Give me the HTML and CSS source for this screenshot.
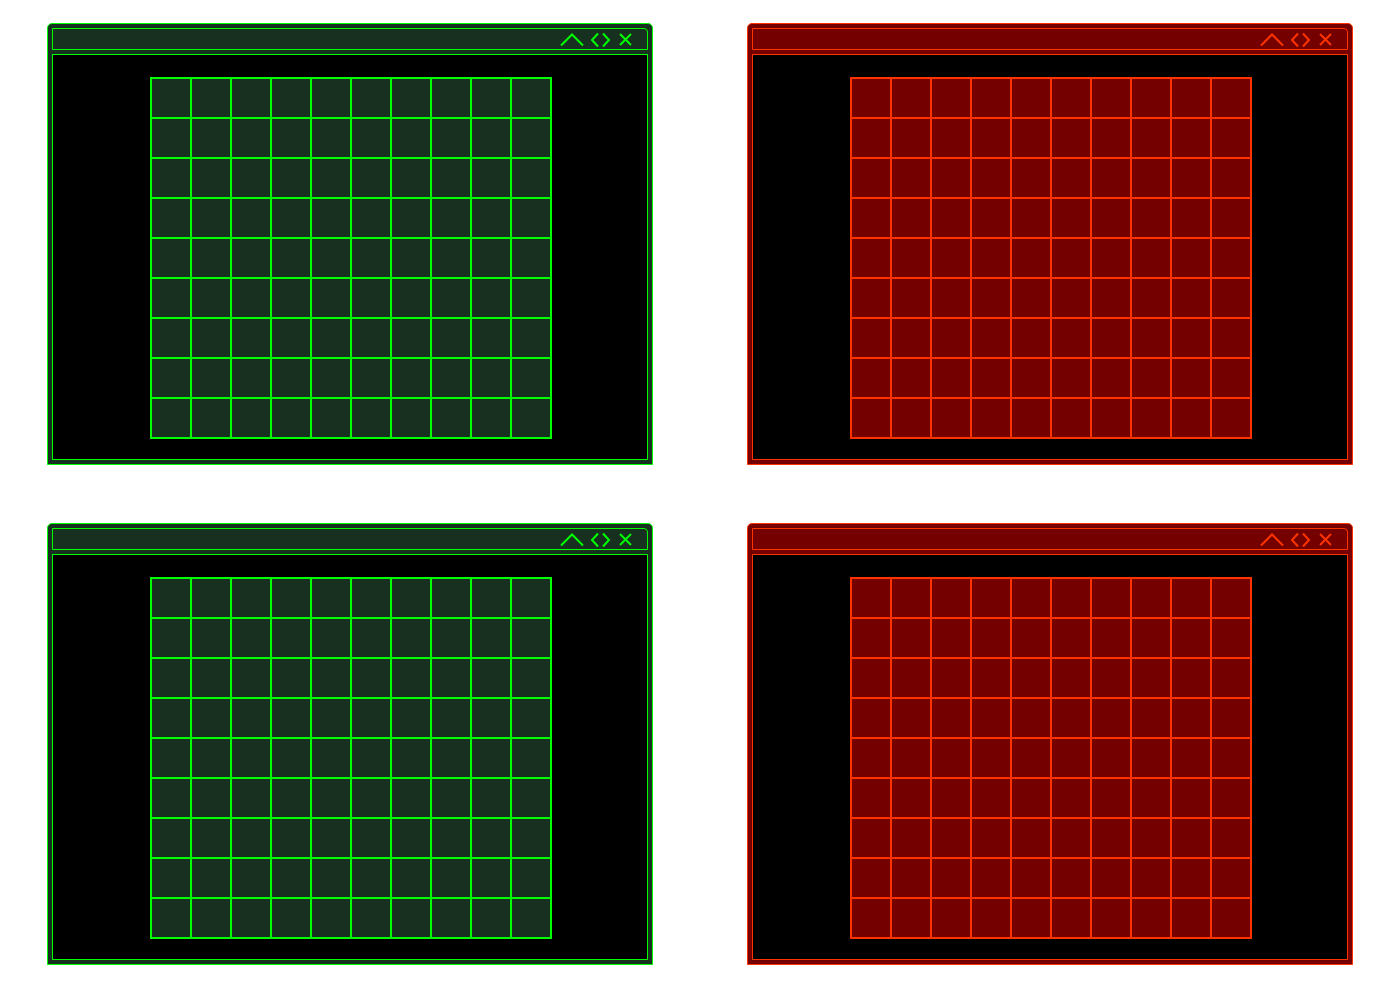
FILE: index.html
```html
<!DOCTYPE html>
<html lang="en">
<head>
    <meta charset="UTF-8">
    <meta name="viewport" content="width=device-width, initial-scale=1.0">
    <title>Grid Windows</title>
    <link rel="stylesheet" href="styles.css">
</head>
<body>
    <div class="desk">
        <div class="win green">
            <div class="titlebar">
                <svg class="controls" width="74" height="20" viewBox="0 0 74 20">
                    <polyline points="1,16.5 12,5.5 23,16.5" />
                    <polyline points="38,4.5 32,11 38,17.5" />
                    <polyline points="43,4.5 49,11 43,17.5" />
                    <line x1="60" y1="5" x2="71" y2="16" />
                    <line x1="71" y1="5" x2="60" y2="16" />
                </svg>
            </div>
            <div class="screen"><div class="board"></div></div>
        </div>

        <div class="win red">
            <div class="titlebar">
                <svg class="controls" width="74" height="20" viewBox="0 0 74 20">
                    <polyline points="1,16.5 12,5.5 23,16.5" />
                    <polyline points="38,4.5 32,11 38,17.5" />
                    <polyline points="43,4.5 49,11 43,17.5" />
                    <line x1="60" y1="5" x2="71" y2="16" />
                    <line x1="71" y1="5" x2="60" y2="16" />
                </svg>
            </div>
            <div class="screen"><div class="board"></div></div>
        </div>

        <div class="win green">
            <div class="titlebar">
                <svg class="controls" width="74" height="20" viewBox="0 0 74 20">
                    <polyline points="1,16.5 12,5.5 23,16.5" />
                    <polyline points="38,4.5 32,11 38,17.5" />
                    <polyline points="43,4.5 49,11 43,17.5" />
                    <line x1="60" y1="5" x2="71" y2="16" />
                    <line x1="71" y1="5" x2="60" y2="16" />
                </svg>
            </div>
            <div class="screen"><div class="board"></div></div>
        </div>

        <div class="win red">
            <div class="titlebar">
                <svg class="controls" width="74" height="20" viewBox="0 0 74 20">
                    <polyline points="1,16.5 12,5.5 23,16.5" />
                    <polyline points="38,4.5 32,11 38,17.5" />
                    <polyline points="43,4.5 49,11 43,17.5" />
                    <line x1="60" y1="5" x2="71" y2="16" />
                    <line x1="71" y1="5" x2="60" y2="16" />
                </svg>
            </div>
            <div class="screen"><div class="board"></div></div>
        </div>
    </div>
</body>
</html>
```

FILE: styles.css
```css
body { margin: 0; background: #fff; font-family: "Liberation Sans", Arial, sans-serif; }

.desk {
    display: grid;
    grid-template-columns: 606px 606px;
    column-gap: 94px;
    row-gap: 58px;
    padding: 23px 0 0 47px;
}

.green { --line: #00ff00; --fill: #17301f; }
.red { --line: #ff3300; --fill: #740000; }

.win {
    box-sizing: border-box;
    width: 606px;
    height: 442px;
    border: 1px solid var(--line);
    border-radius: 5px 5px 0 0;
    background: var(--fill);
    padding: 4px;
    display: flex;
    flex-direction: column;
    gap: 4px;
}

.titlebar {
    box-sizing: border-box;
    height: 22px;
    border: 1px solid var(--line);
    border-top-right-radius: 4px;
    display: flex;
    justify-content: flex-end;
    padding-right: 13px;
    color: var(--line);
}

.controls { display: block; }
.controls polyline, .controls line {
    fill: none;
    stroke: currentColor;
    stroke-width: 2;
}

.screen {
    box-sizing: border-box;
    height: 406px;
    border: 1px solid var(--line);
    background: #000;
}

.board {
    width: 402px;
    height: 362px;
    margin: 22px 0 0 97px;
    background-color: var(--fill);
    background-image:
        linear-gradient(to right, var(--line) 2px, transparent 2px),
        linear-gradient(to bottom, var(--line) 2px, transparent 2px);
    background-size: 40px 40px;
}
```
